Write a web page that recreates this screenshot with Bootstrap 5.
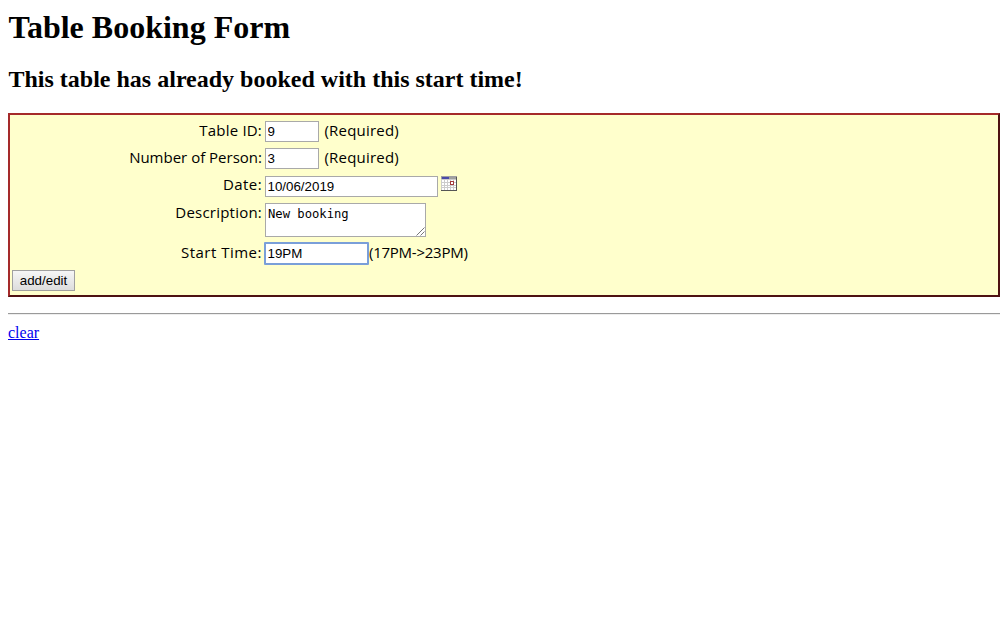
<!DOCTYPE html>
<html lang="en">
<head>
<meta charset="utf-8">
<meta name="viewport" content="width=device-width, initial-scale=1">
<title>Table Booking Form</title>
<link href="https://cdn.jsdelivr.net/npm/bootstrap@5.3.0/dist/css/bootstrap.min.css" rel="stylesheet">
<style>
body{font-family:"Liberation Serif",serif;color:#000;background:#fff;font-size:16px;line-height:18px;padding:0 8px}
h1{font-size:32px;font-weight:700;line-height:37px;padding:9px 0 0 .5px;color:#000}
h2{font-size:24px;font-weight:700;line-height:27px;padding:20px 0 0 .5px;color:#000}
.booking{margin-top:20px;height:184px;border:2px solid;border-color:#a52a2a #4e1212 #4e1212 #a52a2a;background:#ffc;padding:3px 2px 0;font-family:"Trebuchet MS","Open Sans",sans-serif;font-size:15px}
.field{height:27px;gap:3px}
.field-date{height:28px;padding-top:1px}
.field-text{height:40px}
.field label{width:250px;text-align:right;line-height:18px;padding-bottom:3px}
.field-date label{padding-bottom:5px}
.field-text label{align-self:flex-start;padding-top:3px;letter-spacing:.22px}
.field-id label{letter-spacing:.2px}
.field-date label{letter-spacing:.4px}
.field-time label{letter-spacing:.5px}
.hint{margin-left:2.500px;padding-bottom:3px;letter-spacing:.2px}
.range{margin-left:-3px;padding-bottom:3px;letter-spacing:-.25px}
.cal{margin-bottom:6px}
.entry{height:21px;border:1px solid #a9a9a9;padding:1px 1.500px;background:#fff;color:#000;font:13.333px "Liberation Sans",sans-serif;border-radius:0;outline:0}
.w-id{width:54px}.w-date{width:173px}
.w-time{width:105px;height:23px;border:2px solid #7a9fd9;margin-left:-1px;border-radius:1px}
textarea.entry{width:161px;height:34px;padding:3px 2px 0;font:12.2px/15px "DejaVu Sans Mono",monospace;resize:none;overflow:hidden;display:block}
.grip{right:1px;bottom:1px}
.send{width:63px;height:21px;border:1px solid #a0a0a0;border-radius:0;background:linear-gradient(#f6f6f6,#ddd);font:13.333px/15px "Liberation Sans",sans-serif;padding:0;color:#000;margin-top:3px;display:block}
.rule{height:2px;border-top:1px solid #9a9a9a;border-bottom:1px solid #eee;margin:16px 0 9px}
.clear-link{color:#00e}
</style>
</head>
<body>
<h1 class="m-0">Table Booking Form</h1>
<h2 class="m-0">This table has already booked with this start time!</h2>
<form class="booking">
  <div class="field field-id d-flex align-items-center"><label for="tid">Table ID:</label><input id="tid" class="entry w-id" value="9"><span class="hint">(Required)</span></div>
  <div class="field d-flex align-items-center"><label for="num">Number of Person:</label><input id="num" class="entry w-id" value="3"><span class="hint">(Required)</span></div>
  <div class="field field-date d-flex align-items-center"><label for="date">Date:</label><input id="date" class="entry w-date" value="10/06/2019">
    <svg class="cal" width="16" height="15" viewBox="0 0 16 15" shape-rendering="crispEdges"><path fill="#ccc" d="M0 0h16v15H0z"/><path fill="#a0a0a0" d="M0 0h16v3H0z"/><path fill="#4a4aa8" d="M1 1h7v2H1z"/><path fill="#fff" d="M1 4h2v2H1zM4 4h2v2H4zM7 4h2v2H7zM10 4h2v2h-2zM13 4h2v2h-2zM1 7h2v2H1zM4 7h2v2H4zM7 7h2v2H7zM13 7h2v2h-2zM1 10h2v1H1zM4 10h2v1H4zM7 10h2v1H7zM10 10h2v1h-2zM13 10h2v1h-2zM1 12h2v2H1zM4 12h2v2H4zM7 12h2v2H7zM10 12h2v2h-2zM13 12h2v2h-2z"/><path fill="#fff" stroke="#a33b3b" d="M9.500 5.500h3v3h-3z"/><path fill="none" stroke="#555" d="M15.500 1v13.500H0"/></svg>
  </div>
  <div class="field field-text d-flex align-items-center"><label for="desc">Description:</label>
    <div class="position-relative"><textarea id="desc" class="entry">New booking</textarea><svg class="grip position-absolute" width="9" height="9" viewBox="0 0 9 9"><path d="M.5 8.500l8-8M4.500 8.500l4-4" stroke="#777" fill="none"/></svg></div>
  </div>
  <div class="field field-time d-flex align-items-center"><label for="time">Start Time:</label><input id="time" class="entry w-time" value="19PM"><span class="range">(17PM-&gt;23PM)</span></div>
  <button type="button" class="send">add/edit</button>
</form>
<div class="rule"></div>
<a href="#" class="clear-link">clear</a>
</body>
</html>
